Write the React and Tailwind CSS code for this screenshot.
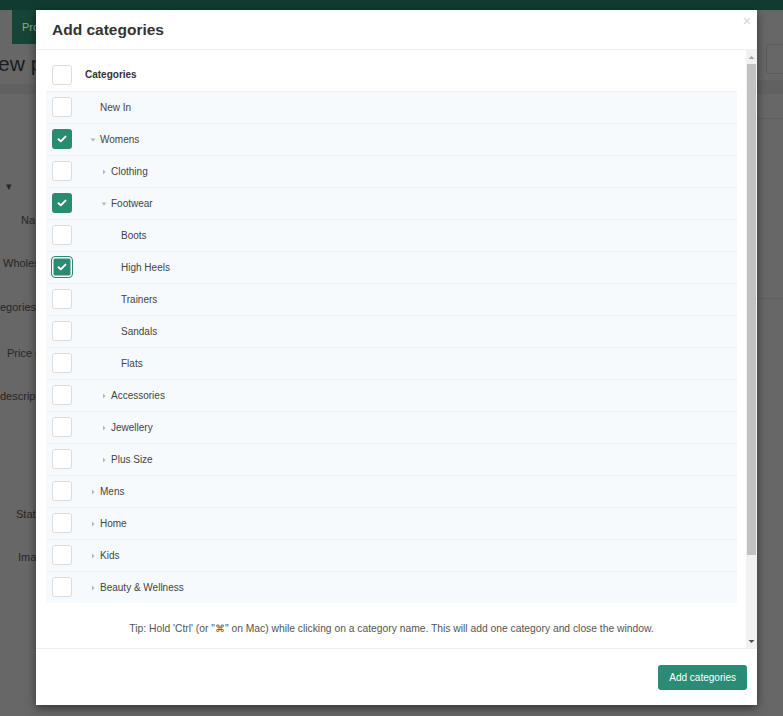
import React from "react";

const rows = [
  { label: "New In", level: 0 },
  { label: "Womens", level: 0, caret: "down", checked: true },
  { label: "Clothing", level: 1, caret: "right" },
  { label: "Footwear", level: 1, caret: "down", checked: true },
  { label: "Boots", level: 2 },
  { label: "High Heels", level: 2, checked: true, focus: true },
  { label: "Trainers", level: 2 },
  { label: "Sandals", level: 2 },
  { label: "Flats", level: 2 },
  { label: "Accessories", level: 1, caret: "right" },
  { label: "Jewellery", level: 1, caret: "right" },
  { label: "Plus Size", level: 1, caret: "right" },
  { label: "Mens", level: 0, caret: "right" },
  { label: "Home", level: 0, caret: "right" },
  { label: "Kids", level: 0, caret: "right" },
  { label: "Beauty & Wellness", level: 0, caret: "right" },
];

const indent = ["pl-[44px]", "pl-[55px]", "pl-[65px]"];

function Caret({ dir }) {
  if (!dir) return <span className="block w-[10px] shrink-0" />;
  return (
    <svg width="10" height="8" viewBox="0 0 10 8" className="block shrink-0">
      {dir === "down" ? (
        <path d="M0.5 2.5 L5.5 2.5 L3 5.5 Z" fill="#b5b5b5" />
      ) : (
        <path d="M2 1.5 L4.5 4 L2 6.5 Z" fill="#b5b5b5" />
      )}
    </svg>
  );
}

function Checkbox({ checked, focus }) {
  if (checked) {
    return (
      <span
        className={
          "flex h-5 w-5 shrink-0 items-center justify-center rounded-[3px] bg-[#2a8a72] " +
          (focus ? "ring-[1.5px] ring-inset ring-white outline outline-1 outline-[#2a8a72]" : "")
        }
      >
        <svg width="10" height="8" viewBox="0 0 10 8">
          <path d="M1.5 4.2 L3.8 6.3 L8.5 1.6" fill="none" stroke="#fff" strokeWidth="1.9" strokeLinecap="round" strokeLinejoin="round" />
        </svg>
      </span>
    );
  }
  return <span className="block h-5 w-5 shrink-0 rounded-[3px] border border-[#dcdcdc] bg-white" />;
}

function Background() {
  const labels = [
    { t: "▾", y: "top-[178px]", x: "left-[6px]" },
    { t: "Na", y: "top-[212px]", x: "left-[21px]" },
    { t: "Wholes", y: "top-[255px]", x: "left-[3px]" },
    { t: "egories", y: "top-[299px]", x: "left-0" },
    { t: "Price (", y: "top-[345px]", x: "left-[7px]" },
    { t: "descript", y: "top-[388px]", x: "left-0" },
    { t: "Stat", y: "top-[506px]", x: "left-[16px]" },
    { t: "Ima", y: "top-[549px]", x: "left-[18px]" },
  ];
  return (
    <div className="relative h-[716px] w-[783px] overflow-hidden bg-[#676767]">
      <div className="h-[10px] bg-[#113b31]" />
      <div className="absolute left-[12px] top-[10px] flex h-[34px] w-[40px] items-center bg-[#164538] pl-[10px] text-[11px] text-[#8fa9a2]">
        Pro
      </div>
      <div className="absolute left-[-2px] top-[48px] text-[21px] text-[#1c1c1c]">ew pr</div>
      <div className="absolute left-0 top-[84px] h-[10px] w-full bg-[#616161]" />
      {labels.map((l) => (
        <div key={l.t} className={"absolute text-[11px] text-[#262626] " + l.y + " " + l.x}>
          {l.t}
        </div>
      ))}
      <div className="absolute left-[766px] top-[44px] h-[30px] w-[30px] rounded-[3px] border border-[#5b5b5b]" />
      <div className="absolute left-[757px] top-[80px] h-[10px] w-[30px] bg-[#616161]" />
      <div className="absolute left-[757px] top-[118px] h-px w-[30px] bg-[#5f5f5f]" />
      <div className="absolute left-[757px] top-[298px] h-px w-[30px] bg-[#5f5f5f]" />
    </div>
  );
}

export default function App() {
  return (
    <div className="relative h-[716px] w-[783px] overflow-hidden font-['Liberation_Sans',Arial,sans-serif]">
      <Background />

      <div className="absolute left-[36px] top-[10px] flex h-[695px] w-[721px] flex-col bg-white shadow-[0_3px_9px_rgba(0,0,0,0.5)]">
        <div className="relative flex h-[40px] shrink-0 items-center border-b border-[#f0f0f0] pl-[16px]">
          <h2 className="text-[15.5px] font-bold text-[#333]">Add categories</h2>
          <span className="absolute right-[6px] top-[4px] text-[14px] leading-none text-[#d4d4d4]">×</span>
        </div>

        <div className="flex h-[598px] shrink-0 overflow-hidden">
          <div className="flex-1 overflow-hidden pl-[10px] pr-[8px] pt-[8px]">
            <div className="w-[691px]">
              <div className="flex h-[33px] items-center bg-white pl-[6px] text-[10px] font-bold text-[#333]">
                <Checkbox />
                <span className="ml-[13px]">Categories</span>
              </div>
              {rows.map((r) => (
                <div
                  key={r.label}
                  className="relative flex h-[32px] items-center border-t border-[#edf2f6] bg-[#f6fafd] text-[10px] text-[#444]"
                >
                  <span className="absolute left-[6px] top-[5px] block">
                    <Checkbox checked={r.checked} focus={r.focus} />
                  </span>
                  <div className={"flex items-center " + indent[r.level]}>
                    <Caret dir={r.caret} />
                    <span>{r.label}</span>
                  </div>
                </div>
              ))}
              <p className="pt-[18px] text-center text-[10.3px] text-[#555]">
                Tip: Hold 'Ctrl' (or "⌘" on Mac) while clicking on a category name. This will add one category and close the window.
              </p>
            </div>
          </div>

          <div className="flex w-[11px] shrink-0 flex-col bg-[#f1f1f1]">
            <div className="flex h-[14px] items-center justify-center">
              <svg width="7" height="5" viewBox="0 0 7 5">
                <path d="M0.5 4 L3.5 1 L6.5 4 Z" fill="#a3a3a3" />
              </svg>
            </div>
            <div className="mx-[1px] h-[491px] bg-[#c1c1c1]" />
            <div className="flex-1" />
            <div className="flex h-[14px] items-center justify-center">
              <svg width="7" height="5" viewBox="0 0 7 5">
                <path d="M0.5 1 L3.5 4 L6.5 1 Z" fill="#505050" />
              </svg>
            </div>
          </div>
        </div>

        <div className="flex flex-1 items-center justify-end border-t border-[#eeeeee] pr-[10px]">
          <button className="h-[25px] rounded-[3px] bg-[#2a8c74] px-[11px] text-[10px] text-white">
            Add categories
          </button>
        </div>
      </div>
    </div>
  );
}
